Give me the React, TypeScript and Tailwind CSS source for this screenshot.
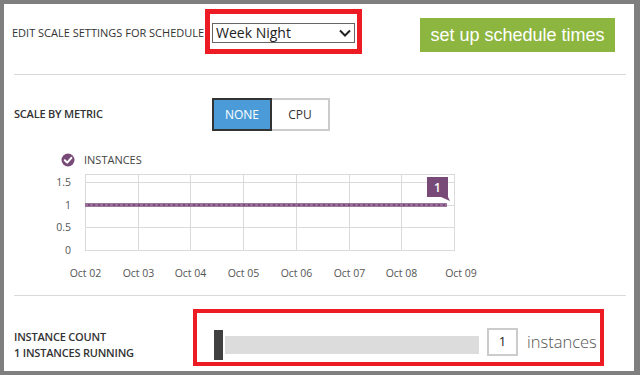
import React from 'react';

const font = { fontFamily: '"Open Sans", "Noto Sans", sans-serif' };

// chart geometry, relative to the svg origin (page x=50, y=150)
const plotLeft = 35;
const plotRight = 404;
const plotTop = 24;
const plotBottom = 100;
const days = ['Oct 02', 'Oct 03', 'Oct 04', 'Oct 05', 'Oct 06', 'Oct 07', 'Oct 08', 'Oct 09'];

function InstancesChart() {
  const step = (plotRight - plotLeft) / 7;
  const yTicks = [
    { label: '1.5', y: 32 },
    { label: '1', y: 55 },
    { label: '0.5', y: 77 },
    { label: '0', y: 100 },
  ];
  return (
    <svg width="440" height="135" viewBox="0 0 440 135" style={font}>
      {/* legend */}
      <circle cx="18" cy="10" r="6.5" fill="#774a77" />
      <path d="M14.8 10.2 L17.2 12.6 L21.4 7.8" fill="none" stroke="#fff" strokeWidth="2" strokeLinecap="round" strokeLinejoin="round" />
      <text x="34" y="14" fontSize="11" fill="#444">INSTANCES</text>

      {/* grid */}
      <rect x={plotLeft + 0.5} y={plotTop + 0.5} width={plotRight - plotLeft} height={plotBottom - plotTop} fill="none" stroke="#dadada" />
      {yTicks.map((t) => (
        <g key={t.label}>
          <line x1={plotLeft} x2={plotRight} y1={t.y + 0.5} y2={t.y + 0.5} stroke="#dadada" />
          <text x="21" y={t.y + 4} fontSize="10.5" fill="#555" textAnchor="end">{t.label}</text>
        </g>
      ))}
      {days.map((d, i) => {
        const x = Math.round(plotLeft + step * i) + 0.5;
        return (
          <g key={d}>
            {i > 0 && i < 7 && <line x1={x} x2={x} y1={plotTop} y2={plotBottom} stroke="#dadada" />}
            <text x={i === 7 ? 411 : x} y="127" fontSize="10.5" fill="#555" textAnchor="middle">{d}</text>
          </g>
        );
      })}

      {/* series */}
      <line x1={plotLeft} x2="397" y1="55" y2="55" stroke="#7a4a7a" strokeWidth="3.5" />
      <line x1={plotLeft} x2="397" y1="55" y2="55" stroke="#b995b9" strokeWidth="1" strokeDasharray="3 2" />

      {/* value badge */}
      <rect x="377" y="27" width="21" height="20" fill="#774a77" />
      <polygon points="391,47 398,47 400,51" fill="#774a77" />
      <text x="387.5" y="41.5" fontSize="12" fill="#fff" textAnchor="middle" fontWeight="600">1</text>
    </svg>
  );
}

export default function App() {
  return (
    <div className="w-[640px] h-[375px] bg-[#7f7f7f] pt-[4px] pl-[4px] pr-[6px] pb-[4px]" style={font}>
      <div className="w-full h-full bg-white flex flex-col text-[#333]">
        {/* schedule header */}
        <div className="h-[70px] flex items-start shrink-0">
          <div className="ml-[8px] mt-[22px] w-[193px] whitespace-nowrap text-[11px] leading-[14px]">
            EDIT SCALE SETTINGS FOR SCHEDULE
          </div>
          <div className="mt-[5px] w-[157px] h-[45px] border-[5px] border-[#ed1c24] pl-[2px] pt-[9px]">
            <div className="w-[143px] h-[20px] border border-[#666] flex items-center justify-between pl-[3px] pr-[3px]">
              <span className="text-[14px] leading-[18px] text-[#222]">Week Night</span>
              <svg width="12" height="8" viewBox="0 0 12 8">
                <path d="M1 1.5 L6 6.5 L11 1.5" fill="none" stroke="#222" strokeWidth="2" />
              </svg>
            </div>
          </div>
          <div
            className="ml-[58px] mt-[14px] w-[195px] h-[34px] bg-[#8cb63f] flex items-center justify-center text-white text-[18px]"
            style={{ fontFamily: '"Liberation Sans", Arial, sans-serif' }}
          >
            set up schedule times
          </div>
        </div>
        <div className="h-px bg-[#d9d9d9] ml-[10px] mr-[8px] shrink-0" />

        {/* scale by metric */}
        <div className="h-[220px] flex flex-col shrink-0">
          <div className="flex items-center mt-[23px]">
            <div className="ml-[10px] w-[198px] text-[11px] font-semibold tracking-[-0.2px]">SCALE BY METRIC</div>
            <div className="flex">
              <div className="w-[60px] h-[33px] bg-[#4a9bd8] border-2 border-[#333] text-white text-[12px] flex items-center justify-center">
                NONE
              </div>
              <div className="w-[58px] h-[33px] border-2 border-l-0 border-[#cccccc] text-[12px] text-[#333] flex items-center justify-center">
                CPU
              </div>
            </div>
          </div>
          <div className="ml-[46px] mt-[19px]">
            <InstancesChart />
          </div>
        </div>
        <div className="h-px bg-[#d9d9d9] ml-[10px] mr-[8px] shrink-0" />

        {/* instance count */}
        <div className="flex items-start">
          <div className="ml-[10px] mt-[33px] w-[179px] text-[11px] leading-[16px] font-semibold tracking-[-0.2px]">
            <div>INSTANCE COUNT</div>
            <div>1 INSTANCES RUNNING</div>
          </div>
          <div className="mt-[13px] w-[411px] h-[57px] border-[4px] border-[#ed1c24] flex items-start pl-[17px]">
            <div className="mt-[17px] w-[9px] h-[30px] bg-[#404040]" />
            <div className="mt-[23px] ml-[2px] w-[254px] h-[18px] bg-[#dcdcdc]" />
            <div className="mt-[15px] ml-[8px] w-[31px] h-[28px] border-2 border-[#cccccc] flex items-center justify-center text-[13px] text-[#222]">
              1
            </div>
            <div className="mt-[17px] ml-[9px] text-[16.5px] leading-[24px] text-[#555] font-light">instances</div>
          </div>
        </div>
      </div>
    </div>
  );
}
